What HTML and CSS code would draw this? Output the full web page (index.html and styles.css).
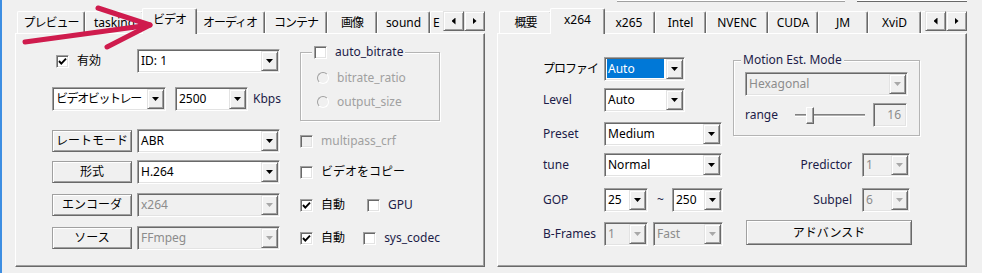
FILE: index.html
```html
<!DOCTYPE html>
<html>
<head>
  <meta charset="utf-8">
  <title>エンコード設定</title>
  <link rel="stylesheet" href="styles.css">
</head>
<body>
  <div class="topline">
    <div class="cut cut-a"></div>
    <div class="cut cut-b"></div>
  </div>

  <div class="window">
    <!-- left: general video settings -->
    <div class="tabctl">
      <div class="tabstrip">
        <div class="tabs">
          <div class="tab jp tw68">プレビュー</div>
          <div class="tab tw59">tasking</div>
          <div class="tab jp sel">ビデオ</div>
          <div class="tab jp tw70">オーディオ</div>
          <div class="tab jp tw62">コンテナ</div>
          <div class="tab jp tw50">画像</div>
          <div class="tab tw53">sound</div>
          <div class="tab rest">E</div>
        </div>
        <div class="spin">
          <span class="spin-btn left"></span>
          <span class="spin-btn right"></span>
        </div>
      </div>
      <div class="panel video">
        <label class="chk-item first">
          <span class="chk"><svg viewBox="0 0 11 11"><path d="M2 5 L4.3 7.6 L9 2.6"/></svg></span>有効
        </label>
        <div class="combo w143"><span class="val">ID: 1</span><span class="drop"></span></div>

        <fieldset class="group bitrate">
          <legend><span class="chk"></span><span class="lbl">auto_bitrate</span></legend>
          <div class="radio-item"><span class="radio"></span>bitrate_ratio</div>
          <div class="radio-item"><span class="radio"></span>output_size</div>
        </fieldset>

        <div class="bitrate-row">
          <div class="combo w114"><span class="val tight">ビデオビットレー</span><span class="drop"></span></div>
          <div class="combo w73"><span class="val">2500</span><span class="drop"></span></div>
          <span class="lbl unit">Kbps</span>
        </div>

        <div class="btn">レートモード</div>
        <div class="combo w143"><span class="val">ABR</span><span class="drop"></span></div>
        <label class="chk-item off"><span class="chk"></span>multipass_crf</label>

        <div class="btn">形式</div>
        <div class="combo w143"><span class="val">H.264</span><span class="drop"></span></div>
        <label class="chk-item"><span class="chk"></span>ビデオをコピー</label>

        <div class="btn">エンコーダ</div>
        <div class="combo w143 dis"><span class="val">x264</span><span class="drop"></span></div>
        <div class="pair">
          <label class="chk-item w67">
            <span class="chk"><svg viewBox="0 0 11 11"><path d="M2 5 L4.3 7.6 L9 2.6"/></svg></span>自動
          </label>
          <label class="chk-item"><span class="chk"></span><span class="lbl">GPU</span></label>
        </div>

        <div class="btn">ソース</div>
        <div class="combo w143 dis"><span class="val">FFmpeg</span><span class="drop"></span></div>
        <div class="pair">
          <label class="chk-item w67">
            <span class="chk"><svg viewBox="0 0 11 11"><path d="M2 5 L4.3 7.6 L9 2.6"/></svg></span>自動
          </label>
          <label class="chk-item"><span class="chk"></span><span class="lbl">sys_codec</span></label>
        </div>
      </div>
    </div>

    <!-- right: encoder specific settings -->
    <div class="tabctl">
      <div class="tabstrip">
        <div class="tabs">
          <div class="tab jp tw53">概要</div>
          <div class="tab sel">x264</div>
          <div class="tab tw52">x265</div>
          <div class="tab tw51">Intel</div>
          <div class="tab tw62">NVENC</div>
          <div class="tab tw50">CUDA</div>
          <div class="tab tw50">JM</div>
          <div class="tab tw53">XviD</div>
          <div class="tab rest"></div>
        </div>
        <div class="spin">
          <span class="spin-btn left"></span>
          <span class="spin-btn right"></span>
        </div>
      </div>
      <div class="panel x264">
        <span class="lbl jp">プロファイ</span>
        <div class="combo w81"><span class="val hl">Auto</span><span class="drop"></span></div>

        <fieldset class="group motion">
          <legend class="lbl">Motion Est. Mode</legend>
          <div class="combo w163 dis"><span class="val">Hexagonal</span><span class="drop"></span></div>
          <div class="range-row">
            <span class="lbl range">range</span>
            <div class="slider"><span class="track"></span><span class="thumb"></span></div>
            <div class="edit">16</div>
          </div>
        </fieldset>

        <span class="lbl">Level</span>
        <div class="combo w81"><span class="val">Auto</span><span class="drop"></span></div>

        <span class="lbl">Preset</span>
        <div class="combo w118"><span class="val">Medium</span><span class="drop"></span></div>

        <span class="lbl">tune</span>
        <div class="combo w118"><span class="val">Normal</span><span class="drop"></span></div>
        <div class="side">
          <span class="lbl">Predictor</span>
          <div class="combo w48 dis"><span class="val">1</span><span class="drop"></span></div>
        </div>

        <span class="lbl">GOP</span>
        <div class="combos">
          <div class="combo w44"><span class="val">25</span><span class="drop"></span></div>
          <span class="lbl tilde">~</span>
          <div class="combo w51"><span class="val">250</span><span class="drop"></span></div>
        </div>
        <div class="side">
          <span class="lbl">Subpel</span>
          <div class="combo w48 dis"><span class="val">6</span><span class="drop"></span></div>
        </div>

        <span class="lbl">B-Frames</span>
        <div class="combos bframes">
          <div class="combo w44 dis"><span class="val">1</span><span class="drop"></span></div>
          <div class="combo w70 dis"><span class="val">Fast</span><span class="drop"></span></div>
        </div>
        <div class="btn adv">アドバンスド</div>
      </div>
    </div>
  </div>

  <svg class="arrow" width="982" height="273" viewBox="0 0 982 273">
    <g stroke="#cf1b4d" stroke-width="5" stroke-linecap="round" stroke-linejoin="round" fill="none">
      <path d="M25 42 L150 25"/>
      <path d="M98 8 L150 25 L107 47"/>
    </g>
  </svg>
</body>
</html>
```

FILE: styles.css
```css
* {
  box-sizing: border-box;
}

body {
  margin: 0;
  height: 273px;
  overflow: hidden;
  position: relative;
  background: #f0f0f0;
  border-left: 2px solid #3d8ee2;
  font-family: "Noto Sans", "Noto Sans CJK JP", sans-serif;
  font-size: 12px;
  line-height: 16px;
  color: #000;
}

/* bits of the controls above, cut off by the screenshot */
.topline {
  display: flex;
  gap: 12px;
  height: 2px;
  padding-left: 615px;
}

.cut {
  height: 2px;
  background: #fff;
  border-bottom: 1px solid #a0a0a0;
}

.cut-a {
  width: 228px;
}

.cut-b {
  width: 110px;
  border-bottom-color: #696969;
}

.window {
  display: flex;
  gap: 12px;
  margin-top: 6px;
  padding-left: 13px;
}

.tabctl {
  flex: none;
  width: 470px;
}

/* tab strip */
.tabstrip {
  display: flex;
  height: 26px;
  position: relative;
  z-index: 1;
  padding-left: 2px;
}

.tabs {
  flex: 1;
  min-width: 0;
  display: flex;
  overflow: hidden;
}

.tab {
  flex: none;
  height: 22px;
  margin-top: 3px;
  padding: 1px 4px 0;
  text-align: center;
  line-height: 20px;
  white-space: nowrap;
  background: #f0f0f0;
  border-top: 1px solid #fff;
  border-left: 1px solid #fff;
  border-right: 1px solid #696969;
  box-shadow: inset -1px 0 #a0a0a0;
  border-radius: 2px 2px 0 0;
}

.tab.jp {
  letter-spacing: -1px;
}

.tab.rest {
  width: 50px;
  padding-left: 2px;
  text-align: left;
}

.tab.sel {
  position: relative;
  z-index: 1;
  width: 55px;
  height: 26px;
  margin: 0 -2px;
  padding: 0 4px;
  line-height: 22px;
}

.tw50 { width: 50px; }
.tw51 { width: 51px; }
.tw52 { width: 52px; }
.tw53 { width: 53px; }
.tw59 { width: 59px; }
.tw62 { width: 62px; }
.tw68 { width: 68px; }
.tw70 { width: 70px; }

.spin {
  flex: none;
  display: flex;
  height: 20px;
  margin-top: 3px;
}

.spin-btn {
  width: 21px;
  height: 20px;
  display: flex;
  align-items: center;
  justify-content: center;
  background: #f0f0f0;
  border: 1px solid;
  border-color: #e3e3e3 #696969 #696969 #e3e3e3;
  box-shadow: inset 1px 1px #fff, inset -1px -1px #a0a0a0;
}

.spin-btn::before {
  content: "";
  width: 4px;
  height: 7px;
  background: #000;
}

.spin-btn.left::before {
  clip-path: polygon(100% 0, 100% 100%, 0 50%);
}

.spin-btn.right::before {
  clip-path: polygon(0 0, 0 100%, 100% 50%);
}

/* tab page */
.panel {
  height: 234px;
  margin-top: -1px;
  display: grid;
  align-items: start;
  border: 1px solid;
  border-color: #fff #696969 #696969 #fff;
  box-shadow: inset -1px -1px #a0a0a0;
}

.video {
  grid-template-columns: 85px 163px 140px;
  grid-template-rows: 38px 42px 31px 33px 33px 24px;
  padding: 15px 0 0 36px;
}

.x264 {
  grid-template-columns: 61px 129px 187px;
  grid-template-rows: 31px 34px 31px 35px 34px 24px;
  padding: 23px 0 0 45px;
}

.lbl {
  color: #1c1c48;
  white-space: nowrap;
}

.x264 > .lbl {
  height: 24px;
  line-height: 24px;
}

.lbl.jp {
  color: #000;
  letter-spacing: -1px;
}

/* combo box */
.combo {
  display: flex;
  height: 24px;
  padding: 1px;
  background: #fff;
  border: 1px solid;
  border-color: #a0a0a0 #fff #fff #a0a0a0;
  box-shadow: inset 1px 1px #696969, inset -1px -1px #e3e3e3;
}

.val {
  flex: 1;
  min-width: 0;
  margin: 0 2px 1px 1px;
  padding-left: 1px;
  line-height: 19px;
  white-space: nowrap;
  overflow: hidden;
}

.val.tight {
  letter-spacing: -1.4px;
}

.val.hl {
  background: #0078d7;
  color: #fff;
}

.drop {
  flex: none;
  width: 17px;
  height: 20px;
  display: flex;
  align-items: center;
  justify-content: center;
  background: #f0f0f0;
  border: 1px solid;
  border-color: #e3e3e3 #696969 #696969 #e3e3e3;
  box-shadow: inset 1px 1px #fff, inset -1px -1px #a0a0a0;
}

.drop::before {
  content: "";
  width: 7px;
  height: 4px;
  background: #000;
  clip-path: polygon(0 0, 100% 0, 50% 100%);
}

.combo.dis {
  background: #f0f0f0;
}

.dis .val {
  color: #8c8c8c;
}

.dis .drop::before {
  background: #a8a8a8;
}

.w44 { width: 44px; }
.w48 { width: 48px; }
.w51 { width: 51px; }
.w70 { width: 70px; }
.w73 { width: 73px; }
.w81 { width: 81px; }
.w114 { width: 114px; }
.w118 { width: 118px; }
.w143 { width: 143px; }
.w163 { width: 163px; }

/* push button */
.btn {
  width: 80px;
  height: 22px;
  margin-top: 1px;
  display: flex;
  align-items: center;
  justify-content: center;
  white-space: nowrap;
  background: #f0f0f0;
  border: 1px solid;
  border-color: #a0a0a0 #696969 #696969 #a0a0a0;
  box-shadow: inset 1px 1px #fff, inset -1px -1px #a0a0a0;
}

.btn.adv {
  width: 166px;
  height: 25px;
  margin: -2px 0 0 13px;
}

/* check boxes and radios */
.chk-item {
  display: flex;
  align-items: center;
  gap: 8px;
  height: 24px;
  white-space: nowrap;
}

.chk-item.first {
  padding-left: 4px;
}

.chk-item.w67 {
  width: 67px;
}

.chk {
  flex: none;
  width: 13px;
  height: 13px;
  display: flex;
  background: #fff;
  border: 1px solid;
  border-color: #a0a0a0 #fff #fff #a0a0a0;
  box-shadow: inset 1px 1px #696969, inset -1px -1px #e3e3e3;
}

.chk svg {
  width: 11px;
  height: 11px;
}

.chk path {
  fill: none;
  stroke: #000;
  stroke-width: 1.9;
}

.off {
  color: #a0a0a0;
}

.off .chk {
  background: #f0f0f0;
}

.pair {
  display: flex;
}

.radio-item {
  display: flex;
  align-items: center;
  gap: 8px;
  height: 16px;
  margin-left: 16px;
  color: #a0a0a0;
  white-space: nowrap;
}

.radio {
  width: 12px;
  height: 12px;
  border-radius: 50%;
  background: #f0f0f0;
  border: 1px solid;
  border-color: #a0a0a0 #fff #fff #a0a0a0;
}

/* group boxes */
.group {
  margin: 0;
  padding: 0;
  min-width: 0;
  border: 1px solid #b4b4b4;
  box-shadow: inset 1px 1px #fff, 1px 1px #fff;
}

.group legend {
  display: flex;
  align-items: center;
  gap: 8px;
  height: 16px;
  padding: 0 2px;
  background: #f0f0f0;
}

.bitrate {
  grid-column: 3;
  grid-row: 1 / span 2;
  height: 77px;
  margin-top: -5px;
}

.bitrate legend {
  margin-left: 11px;
}

.bitrate .radio-item:first-of-type {
  margin-top: 10px;
}

.bitrate .radio-item + .radio-item {
  margin-top: 8px;
}

.motion {
  grid-column: 3;
  grid-row: 1 / span 3;
  height: 84px;
  margin-top: -5px;
}

.motion legend {
  margin-left: 7px;
}

.motion .combo {
  margin: 4px 0 0 11px;
}

.range-row {
  display: flex;
  align-items: center;
  height: 24px;
  margin: 7px 0 0 11px;
}

.range {
  width: 50px;
}

.slider {
  position: relative;
  display: flex;
  align-items: center;
  width: 70px;
  height: 17px;
}

.track {
  flex: 1;
  height: 3px;
  background: #b0b0b0;
  border-top: 1px solid #808080;
  border-bottom: 1px solid #fff;
}

.thumb {
  position: absolute;
  left: 11px;
  top: 0;
  width: 8px;
  height: 17px;
  background: #f0f0f0;
  border: 1px solid;
  border-color: #fff #696969 #696969 #fff;
  box-shadow: inset -1px -1px #a0a0a0;
}

.edit {
  width: 34px;
  height: 24px;
  margin-left: 8px;
  padding-right: 5px;
  text-align: right;
  line-height: 22px;
  color: #8c8c8c;
  background: #f0f0f0;
  border: 1px solid;
  border-color: #a0a0a0 #fff #fff #a0a0a0;
  box-shadow: inset 1px 1px #696969, inset -1px -1px #e3e3e3;
}

/* rows on the left panel */
.bitrate-row {
  grid-column: 1 / span 2;
  display: flex;
  align-items: center;
}

.bitrate-row .combo + .combo {
  margin-left: 9px;
}

.unit {
  margin-left: 5px;
}

/* rows on the right panel */
.combos {
  display: flex;
  align-items: center;
}

.tilde {
  width: 8px;
  margin: 0 7px 0 9px;
}

.bframes .combo + .combo {
  margin-left: 5px;
}

.side {
  display: flex;
  justify-content: flex-end;
  align-items: center;
  gap: 10px;
  height: 24px;
  padding-right: 10px;
}

.arrow {
  position: absolute;
  z-index: 2;
  left: -2px;
  top: 0;
  pointer-events: none;
}
```
